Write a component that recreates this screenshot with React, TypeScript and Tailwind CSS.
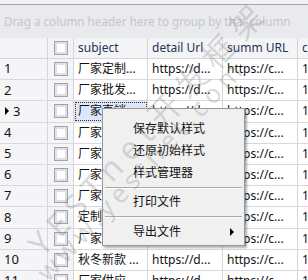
import React from "react";

const rows: { no: number; subject: string }[] = [
    { no: 1, subject: "厂家定制..." },
    { no: 2, subject: "厂家批发..." },
    { no: 3, subject: "厂家直销..." },
    { no: 4, subject: "厂家直销..." },
    { no: 5, subject: "厂家直销..." },
    { no: 6, subject: "厂家直销..." },
    { no: 7, subject: "厂家直销..." },
    { no: 8, subject: "定制..." },
    { no: 9, subject: "厂家..." },
    { no: 10, subject: "秋冬新款 ..." },
    { no: 11, subject: "厂家供应..." },
]

const cols = "grid grid-cols-[48px_26px_74px_75px_75px_1fr]"

const CheckBox: React.FC = () => (
    <div className="w-[14px] h-[14px] border border-[#a2a2aa] bg-white shadow-[inset_0_0_0_2px_#dfdfe4]" />
)

const App: React.FC = () => {
    return (
        <div className="relative w-[308px] h-[280px] overflow-hidden bg-white text-[12px] font-['Noto_Sans','Noto_Sans_CJK_SC',sans-serif]">
            <div className="h-[4px] bg-[#f2f2f2]" />
            <div className="h-[34px] border-t border-[#a6a6a6] bg-[#e9eaee] flex items-center pl-[4px] text-[11.7px] text-[#c6c6c8] whitespace-nowrap">
                Drag a column header here to group by that column
            </div>

            {/* header */}
            <div className={`${cols} h-[21px] bg-[#f4f4f6] border-b border-[#d5d5dc] text-[#1d3557]`}>
                <div className="border-r border-[#d5d5dc]" />
                <div className="border-r border-[#d5d5dc] flex items-center justify-center">
                    <CheckBox />
                </div>
                <div className="border-r border-[#d5d5dc] flex items-center pl-[4px]">subject</div>
                <div className="border-r border-[#d5d5dc] flex items-center pl-[4px]">detail Url</div>
                <div className="border-r border-[#d5d5dc] flex items-center pl-[4px]">summ URL</div>
                <div className="flex items-center pl-[4px]">c</div>
            </div>

            {rows.map((r) => (
                <div key={r.no} className={`${cols} h-[21.2px] border-b border-[#d8d8df] text-[#111]`}>
                    <div className="border-r border-[#d5d5dc] bg-[#f5f5f7] flex items-center pl-[4px] text-[13px]">
                        {r.no === 3 ? (
                            <>
                                <span className="w-0 h-0 border-y-[4px] border-y-transparent border-l-[4px] border-l-black ml-[1px] mr-[4px]" />
                                3
                            </>
                        ) : (
                            r.no
                        )}
                    </div>
                    <div className="border-r border-[#d5d5dc] bg-[#f5f5f7] flex items-center justify-center">
                        <CheckBox />
                    </div>
                    <div
                        className={`border-r border-[#d5d5dc] flex items-center pl-[4px] overflow-hidden whitespace-nowrap ${
                            r.no === 3 ? "bg-[#dde7f9] outline-1 outline-dotted outline-[#333] -outline-offset-2" : ""
                        }`}
                    >
                        {r.subject}
                    </div>
                    <div className="border-r border-[#d5d5dc] flex items-center pl-[4px] whitespace-nowrap overflow-hidden">https://d...</div>
                    <div className="border-r border-[#d5d5dc] flex items-center pl-[4px] whitespace-nowrap overflow-hidden">https://c...</div>
                    <div className="flex items-center pl-[4px]">1</div>
                </div>
            ))}

            {/* context menu */}
            <div className="absolute left-[102px] top-[108px] w-[143px] h-[138px] bg-[#f0f0f0] border border-[#979797] shadow-[2px_2px_2px_rgba(0,0,0,0.3)] pt-[9px] text-[#111]">
                <div className="h-[22px] flex items-center pl-[30px]">保存默认样式</div>
                <div className="h-[22px] flex items-center pl-[30px]">还原初始样式</div>
                <div className="h-[22px] flex items-center pl-[30px]">样式管理器</div>
                <div className="h-[7px] flex items-center px-[2px]">
                    <div className="w-full h-[2px] border-t border-[#a9a9a9] border-b border-b-white" />
                </div>
                <div className="h-[22px] flex items-center pl-[30px]">打印文件</div>
                <div className="h-[8px] flex items-center px-[2px]">
                    <div className="w-full h-[2px] border-t border-[#a9a9a9] border-b border-b-white" />
                </div>
                <div className="h-[22px] flex items-center pl-[30px] pr-[10px] justify-between">
                    <span>导出文件</span>
                    <span className="w-0 h-0 border-y-[4px] border-y-transparent border-l-[4px] border-l-black" />
                </div>
            </div>

            {/* watermark */}
            <div className="pointer-events-none absolute left-[-60px] top-[90px] w-[420px] h-[100px] flex flex-col items-center justify-center -rotate-[47deg] text-[rgba(130,130,130,0.28)] whitespace-nowrap leading-none">
                <div className="text-[32px] tracking-[8px] ml-[16px]">YESTnet开发框架</div>
                <div className="text-[26px] tracking-[5px] mt-[-6px] mr-[56px]">www.yestnet.com</div>
            </div>
        </div>
    )
}

export default App
